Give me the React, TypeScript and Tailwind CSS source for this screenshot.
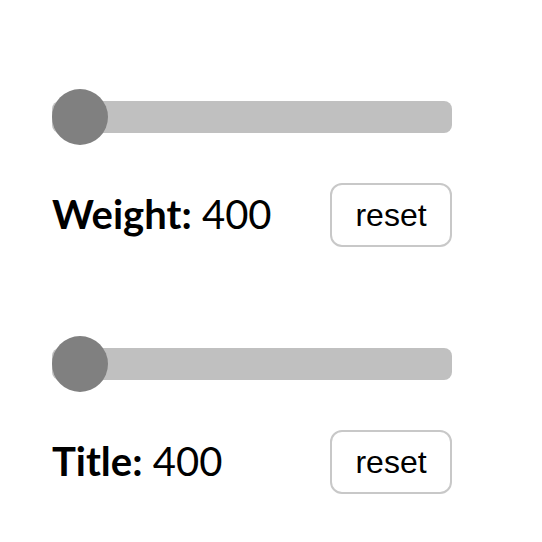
import { useState } from "react";

interface SliderRowProps {
  label: string;
  value: number;
  onReset: () => void;
}

const SliderRow = ({ label, value, onReset }: SliderRowProps) => {
  const pct = ((value - 400) / (900 - 400)) * 344;
  return (
    <div className="flex flex-col gap-[38px] w-[400px]">
      <div className="relative h-[56px] flex items-center">
        <div className="w-full h-[32px] rounded-[8px] bg-[#c0c0c0]" />
        <div
          className="absolute top-0 w-[56px] h-[56px] rounded-full bg-[#808080]"
          style={{ left: pct }}
        />
      </div>
      <div className="flex items-center justify-between">
        <div className="text-[40px] leading-none text-black font-['Lato',sans-serif] -mt-[2px]">
          <span className="font-bold">{label}:</span> {value}
        </div>
        <button
          onClick={onReset}
          className="w-[122px] h-[64px] rounded-[12px] border-2 border-[#c8c8c8] bg-white text-[32px] text-black font-['Liberation_Sans',Arial,sans-serif]"
        >
          reset
        </button>
      </div>
    </div>
  );
};

const App = () => {
  const [weight, setWeight] = useState(400);
  const [title, setTitle] = useState(400);

  return (
    <div className="min-h-screen bg-white pl-[52px] pt-[89px] flex flex-col gap-[89px]">
      <SliderRow label="Weight" value={weight} onReset={() => setWeight(400)} />
      <SliderRow label="Title" value={title} onReset={() => setTitle(400)} />
    </div>
  );
};

export default App;
